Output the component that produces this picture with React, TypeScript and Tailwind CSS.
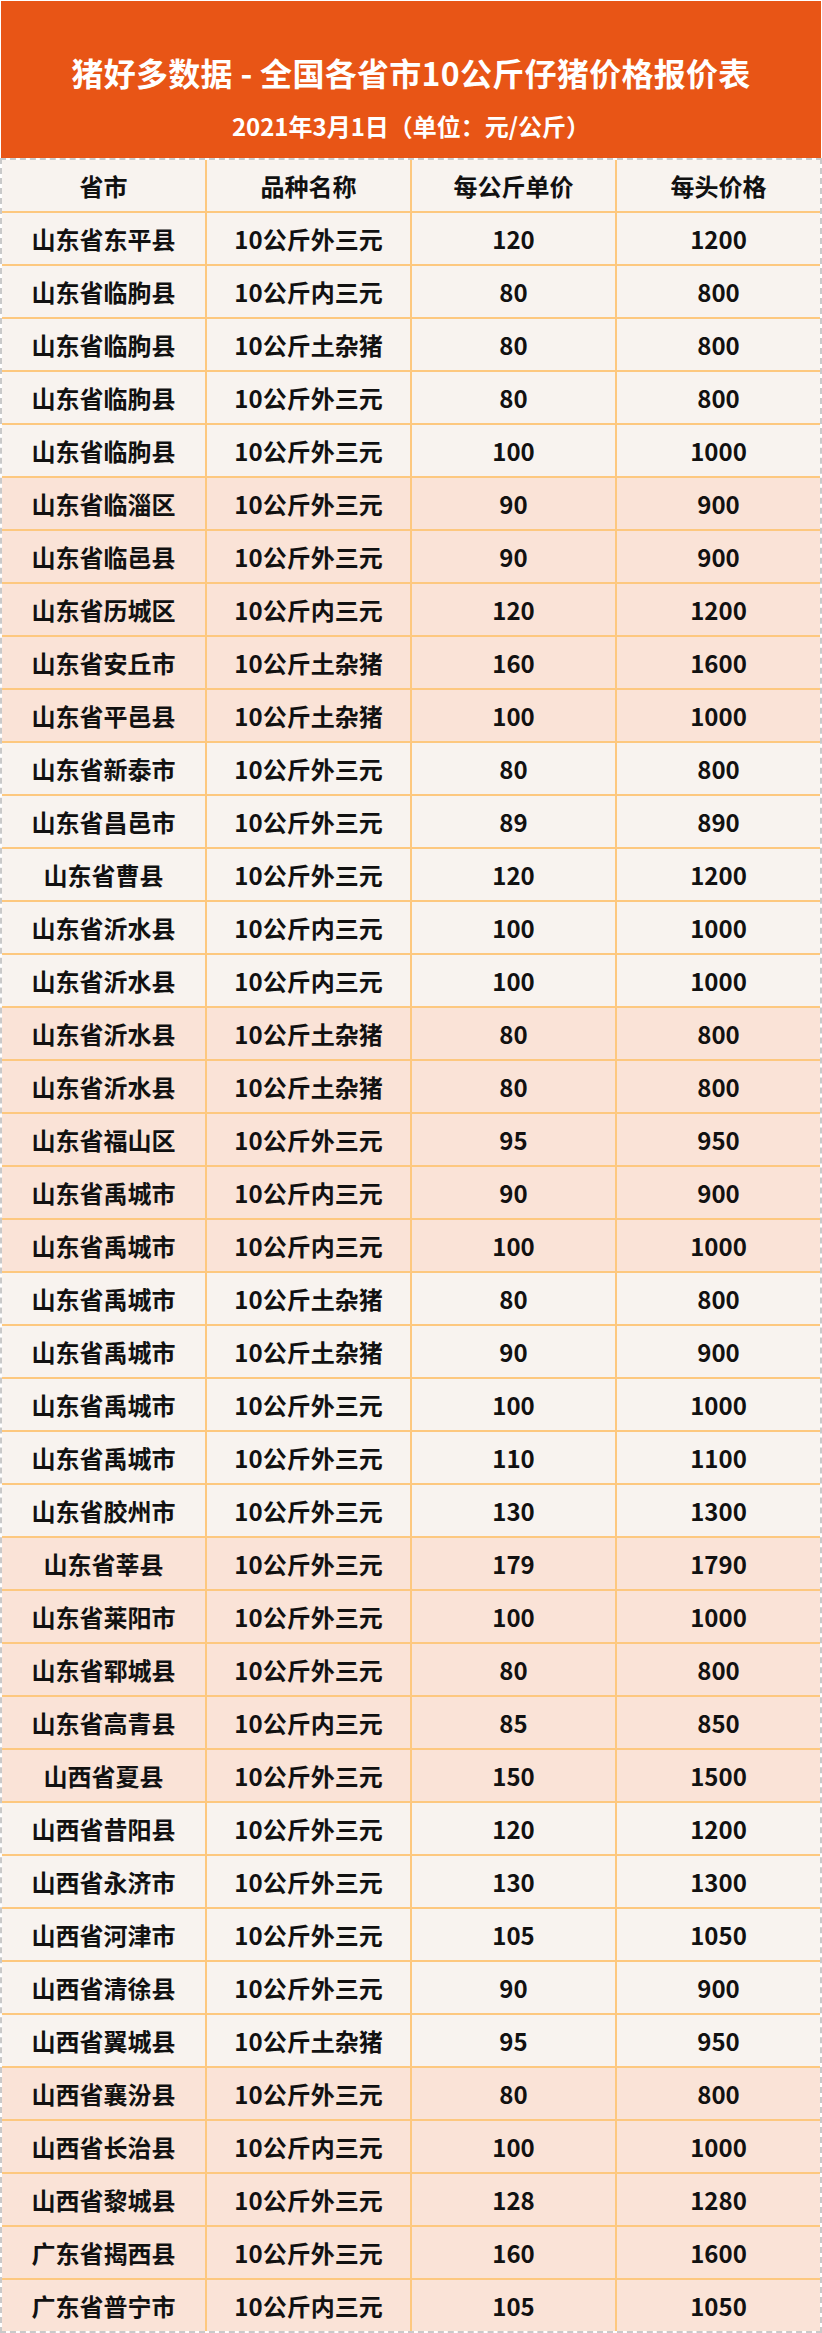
const rows: [string, string, number, number][] = [
  ["山东省东平县", "10公斤外三元", 120, 1200],
  ["山东省临朐县", "10公斤内三元", 80, 800],
  ["山东省临朐县", "10公斤土杂猪", 80, 800],
  ["山东省临朐县", "10公斤外三元", 80, 800],
  ["山东省临朐县", "10公斤外三元", 100, 1000],
  ["山东省临淄区", "10公斤外三元", 90, 900],
  ["山东省临邑县", "10公斤外三元", 90, 900],
  ["山东省历城区", "10公斤内三元", 120, 1200],
  ["山东省安丘市", "10公斤土杂猪", 160, 1600],
  ["山东省平邑县", "10公斤土杂猪", 100, 1000],
  ["山东省新泰市", "10公斤外三元", 80, 800],
  ["山东省昌邑市", "10公斤外三元", 89, 890],
  ["山东省曹县", "10公斤外三元", 120, 1200],
  ["山东省沂水县", "10公斤内三元", 100, 1000],
  ["山东省沂水县", "10公斤内三元", 100, 1000],
  ["山东省沂水县", "10公斤土杂猪", 80, 800],
  ["山东省沂水县", "10公斤土杂猪", 80, 800],
  ["山东省福山区", "10公斤外三元", 95, 950],
  ["山东省禹城市", "10公斤内三元", 90, 900],
  ["山东省禹城市", "10公斤内三元", 100, 1000],
  ["山东省禹城市", "10公斤土杂猪", 80, 800],
  ["山东省禹城市", "10公斤土杂猪", 90, 900],
  ["山东省禹城市", "10公斤外三元", 100, 1000],
  ["山东省禹城市", "10公斤外三元", 110, 1100],
  ["山东省胶州市", "10公斤外三元", 130, 1300],
  ["山东省莘县", "10公斤外三元", 179, 1790],
  ["山东省莱阳市", "10公斤外三元", 100, 1000],
  ["山东省郓城县", "10公斤外三元", 80, 800],
  ["山东省高青县", "10公斤内三元", 85, 850],
  ["山西省夏县", "10公斤外三元", 150, 1500],
  ["山西省昔阳县", "10公斤外三元", 120, 1200],
  ["山西省永济市", "10公斤外三元", 130, 1300],
  ["山西省河津市", "10公斤外三元", 105, 1050],
  ["山西省清徐县", "10公斤外三元", 90, 900],
  ["山西省翼城县", "10公斤土杂猪", 95, 950],
  ["山西省襄汾县", "10公斤外三元", 80, 800],
  ["山西省长治县", "10公斤内三元", 100, 1000],
  ["山西省黎城县", "10公斤外三元", 128, 1280],
  ["广东省揭西县", "10公斤外三元", 160, 1600],
  ["广东省普宁市", "10公斤内三元", 105, 1050],
];

const headers = ["省市", "品种名称", "每公斤单价", "每头价格"];

const Cell = ({ text, pink }: { text: string | number; pink?: boolean }) => (
  <div
    className={`h-[51px] flex items-center justify-center text-[24px] font-bold text-[#111] ${
      pink ? "bg-[#fae3d7]" : "bg-[#f8f3ef]"
    }`}
  >
    {text}
  </div>
);

const App = () => {
  return (
    <div
      className="w-[822px] bg-white"
      style={{ fontFamily: '"Noto Sans CJK SC", "Noto Sans", sans-serif' }}
    >
      {/* title band */}
      <div className="h-[157px] mx-[1px] mt-[1px] bg-[#e85516] flex flex-col items-center text-white font-bold">
        <h1 className="mt-[51px] text-[32px] leading-[40px] tracking-[0.3px]">猪好多数据 - 全国各省市10公斤仔猪价格报价表</h1>
        <p className="mt-[19px] text-[24px] leading-[30px]">2021年3月1日（单位：元/公斤）</p>
      </div>

      {/* table */}
      <div className="border-2 border-dashed border-[#c9c9c9] bg-white">
        <div className="grid grid-cols-[203px_203px_203px_203px] gap-[2px] bg-[#fdc87f]">
          {headers.map((h) => (
            <Cell key={h} text={h} />
          ))}
          {rows.map((r, i) => {
            const pink = Math.floor(i / 5) % 2 === 1;
            return r.map((c, j) => <Cell key={`${i}-${j}`} text={c} pink={pink} />);
          })}
        </div>
      </div>
    </div>
  );
};

export default App;
